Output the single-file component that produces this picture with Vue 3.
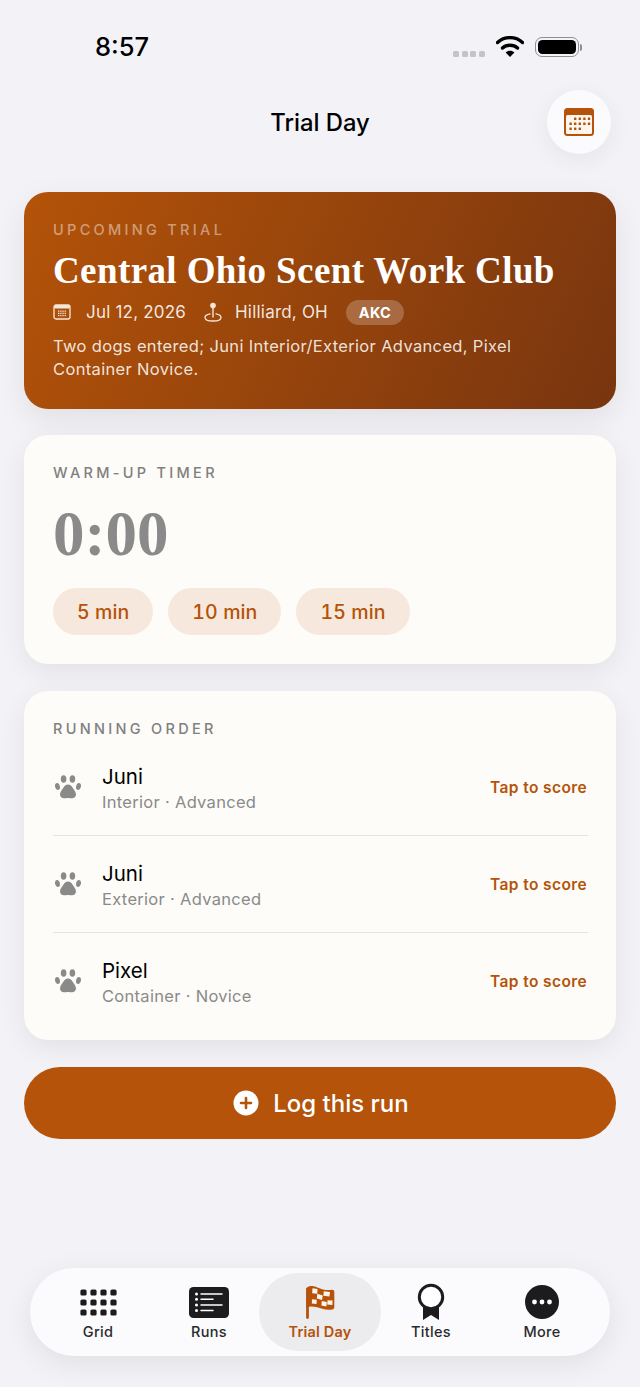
<template>
  <div class="screen">
    <div class="status">
      <span class="time">8:57</span>
      <div class="status-right">
        <div class="signal"><i v-for="n in 4" :key="n"></i></div>
        <svg class="wifi" width="28" height="22" viewBox="0 0 28 22">
          <path d="M1.500 6.500C8.500 0 19.500 0 26.500 6.500" fill="none" stroke="#000" stroke-width="3.400" stroke-linecap="round"/>
          <path d="M6.500 12C10.500 8.300 17.500 8.300 21.500 12" fill="none" stroke="#000" stroke-width="3.400" stroke-linecap="round"/>
          <path d="M9.600 16.400C12 14.200 16 14.200 18.400 16.400L14 21Z" fill="#000"/>
        </svg>
        <div class="battery"><div class="battery-in"></div></div>
        <div class="battery-cap"></div>
      </div>
    </div>

    <header class="top">
      <span></span>
      <h1>Trial Day</h1>
      <button class="cal-btn">
        <svg width="32" height="30" viewBox="0 0 32 30">
          <rect x="1" y="1" width="30" height="28" rx="3.500" fill="#b45309"/>
          <rect x="3" y="8" width="26" height="19" rx="1.500" fill="#fdf6ef"/>
          <g fill="#b45309">
            <rect v-for="d in calDots" :key="d.x + '-' + d.y" :x="d.x" :y="d.y" width="2.400" height="2.400" rx=".5"/>
          </g>
        </svg>
      </button>
    </header>

    <section class="hero">
      <div class="eyebrow">UPCOMING TRIAL</div>
      <h2>Central Ohio Scent Work Club</h2>
      <div class="meta">
        <svg class="meta-ico" width="18" height="16" viewBox="0 0 18 16">
          <rect x="1" y="1" width="16" height="14" rx="2" fill="none" stroke="#f6e6d8" stroke-width="1.300"/>
          <rect x="1" y="1" width="16" height="3.400" rx="1.500" fill="#f6e6d8"/>
          <g fill="#f6e6d8">
            <rect v-for="d in metaDots" :key="d.x + '-' + d.y" :x="d.x" :y="d.y" width="1.300" height="1.300"/>
          </g>
        </svg>
        <span class="date">Jul 12, 2026</span>
        <svg class="meta-ico pin" width="18" height="20" viewBox="0 0 18 20">
          <circle cx="9" cy="3.600" r="2.800" fill="#f6e6d8"/>
          <path d="M9 6v9" stroke="#f6e6d8" stroke-width="1.400" stroke-linecap="round"/>
          <path d="M6 11.800C3 12.400 1 13.600 1 15.400 1 17.600 4.600 19 9 19s8-1.400 8-3.600c0-1.800-2-3-5-3.600" fill="none" stroke="#f6e6d8" stroke-width="1.300" stroke-linecap="round"/>
        </svg>
        <span class="place">Hilliard, OH</span>
        <span class="badge">AKC</span>
      </div>
      <p>Two dogs entered; Juni Interior/Exterior Advanced, Pixel Container Novice.</p>
    </section>

    <section class="card timer">
      <div class="label">WARM-UP TIMER</div>
      <div class="clock">0:00</div>
      <div class="chips">
        <button v-for="c in chips" :key="c" class="chip">{{ c }}</button>
      </div>
    </section>

    <section class="card order">
      <div class="label">RUNNING ORDER</div>
      <div v-for="r in runs" :key="r.sub" class="row">
        <svg class="paw" width="26" height="24" viewBox="0 0 26 24" fill="#8a8a8a">
          <ellipse cx="2.500" cy="11.500" rx="2.400" ry="3.500" transform="rotate(-12 2.500 11.500)"/>
          <ellipse cx="8.600" cy="4" rx="2.800" ry="3.800"/>
          <ellipse cx="17.400" cy="4" rx="2.800" ry="3.800"/>
          <ellipse cx="23.500" cy="11.500" rx="2.400" ry="3.500" transform="rotate(12 23.500 11.500)"/>
          <path d="M13 9.500c2.300 0 3.600 1.500 4.800 3.500 1.300 2.200 3.200 3.900 3.200 6.500 0 2.400-1.800 3.800-4 3.800-1.600 0-2.600-.4-4-.4s-2.400.4-4 .4c-2.200 0-4-1.400-4-3.800 0-2.600 1.900-4.300 3.200-6.500 1.200-2 2.500-3.500 4.800-3.500z"/>
        </svg>
        <div class="row-text">
          <div class="name">{{ r.name }}</div>
          <div class="sub">{{ r.sub }}</div>
        </div>
        <span class="tap">Tap to score</span>
      </div>
    </section>

    <button class="log">
      <svg width="26" height="26" viewBox="0 0 26 26">
        <circle cx="13" cy="13" r="12.500" fill="#fff"/>
        <path d="M13 8v10M8 13h10" stroke="#b45309" stroke-width="2.600" stroke-linecap="round"/>
      </svg>
      <span>Log this run</span>
    </button>

    <nav class="tabs">
      <div class="tab">
        <div class="ico">
          <svg width="37" height="27" viewBox="0 0 37 27" fill="#1c1c1e">
            <rect v-for="d in gridDots" :key="d.x + '-' + d.y" :x="d.x" :y="d.y" width="6.200" height="6.200" rx="1.600"/>
          </svg>
        </div>
        <span>Grid</span>
      </div>
      <div class="tab">
        <div class="ico">
          <svg width="40" height="31" viewBox="0 0 40 31">
            <rect width="40" height="31" rx="4.500" fill="#1c1c1e"/>
            <g fill="#fff">
              <circle cx="7.500" cy="7" r="1.500"/>
              <circle cx="7.500" cy="12.300" r="1.500"/>
              <circle cx="7.500" cy="18" r="1.500"/>
              <circle cx="7.500" cy="23.500" r="1.500"/>
            </g>
            <path d="M12 7h21M12 12.300h12M12 18h21M12 23.500h12" stroke="#fff" stroke-width="1.500" stroke-linecap="round"/>
          </svg>
        </div>
        <span>Runs</span>
      </div>
      <div class="tab active">
        <div class="ico">
          <svg width="30" height="34" viewBox="0 0 30 34">
            <path d="M2.500 4v28.500" stroke="#b45309" stroke-width="2.800" stroke-linecap="round"/>
            <path d="M1.500 5C1.500 2.500 3.500 1 6 1c5 0 8 2.500 12 3.500 3.500.8 6.500.5 9 .3 1.300-.1 2.300.7 2.300 2v15.500c0 1.300-.8 2-2 2.200-3.500.5-6.500.3-10-.7-4.500-1.300-9-3.400-15.800-1.800z" fill="#b45309"/>
            <g fill="#fdf3ea">
              <path d="M7.500 3.300 12.500 4 12.300 8.800 7.200 8.200z"/>
              <path d="M18.800 6.200 25 7 24.500 11.500 18.300 10.800z"/>
              <path d="M12.300 8.800 17.800 10.500 17 15 11.800 13.500z"/>
              <path d="M22.600 15.200 27.600 15.600 27.400 20 22.200 19.600z"/>
              <path d="M7 14.200 11.800 14.800 11.500 19 6.800 18.500z"/>
              <path d="M16.800 16 21.800 17 21.400 21.400 16.400 20.500z"/>
            </g>
          </svg>
        </div>
        <span>Trial Day</span>
      </div>
      <div class="tab">
        <div class="ico">
          <svg width="28" height="38" viewBox="0 0 28 38">
            <path d="M6 22v15l8-5 8 5V22z" fill="#1c1c1e"/>
            <circle cx="14" cy="14" r="11.700" fill="#fff" stroke="#1c1c1e" stroke-width="3"/>
          </svg>
        </div>
        <span>Titles</span>
      </div>
      <div class="tab">
        <div class="ico">
          <svg width="34" height="34" viewBox="0 0 34 34">
            <circle cx="17" cy="17" r="17" fill="#1c1c1e"/>
            <g fill="#fff">
              <circle cx="9.500" cy="17" r="2.400"/>
              <circle cx="17" cy="17" r="2.400"/>
              <circle cx="24.500" cy="17" r="2.400"/>
            </g>
          </svg>
        </div>
        <span>More</span>
      </div>
    </nav>
  </div>
</template>

<script setup>
const chips = ['5 min', '10 min', '15 min']

const runs = [
  { name: 'Juni', sub: 'Interior · Advanced' },
  { name: 'Juni', sub: 'Exterior · Advanced' },
  { name: 'Pixel', sub: 'Container · Novice' },
]

function dots(cols, rows, x0, y0, dx, dy) {
  const out = []
  for (let r = 0; r < rows; r++) {
    for (let c = 0; c < cols; c++) out.push({ x: x0 + c * dx, y: y0 + r * dy })
  }
  return out
}

const calDots = [
  ...dots(4, 1, 11, 10.5, 4.6, 0),
  ...dots(5, 1, 6.4, 15.5, 4.6, 0),
  ...dots(3, 1, 6.4, 20.5, 4.6, 0),
]
const metaDots = dots(4, 3, 5, 6.5, 2.2, 2.2)
const gridDots = dots(4, 3, 0.4, 0.4, 10, 10)
</script>

<style>
html, body {
  margin: 0;
  background: #f2f2f7;
}
</style>

<style scoped>
.screen {
  width: 640px;
  height: 1387px;
  box-sizing: border-box;
  display: flex;
  flex-direction: column;
  padding: 0 24px;
  background: #f2f2f7;
  font-family: Inter, "Noto Sans", sans-serif;
  color: #000;
  overflow: hidden;
}
.status {
  height: 90px;
  flex: none;
  display: flex;
  align-items: flex-start;
  justify-content: space-between;
  margin: 0 -24px;
  padding: 0 58px 0 95px;
  box-sizing: border-box;
}
.time {
  margin-top: 31px;
  font-size: 25.500px;
  line-height: 32px;
  font-weight: 500;
}
.status-right {
  display: flex;
  align-items: center;
  margin-top: 36px;
}
.signal {
  display: flex;
  gap: 2.700px;
  margin-top: 13px;
  margin-right: 11px;
}
.signal i {
  width: 6px;
  height: 6px;
  border-radius: 1.500px;
  background: #c4c4c6;
}
.wifi {
  margin-right: 11px;
}
.battery {
  width: 44px;
  height: 20px;
  box-sizing: border-box;
  border: 1.500px solid #8e8e93;
  border-radius: 7px;
  padding: 2px;
}
.battery-in {
  height: 100%;
  background: #000;
  border-radius: 4.500px;
}
.battery-cap {
  width: 2px;
  height: 7px;
  margin-left: 1px;
  border-radius: 0 2px 2px 0;
  background: #8e8e93;
}
.top {
  flex: none;
  display: grid;
  grid-template-columns: 64px 1fr 64px;
  align-items: center;
  height: 64px;
  margin: 0 5px 38px;
}
.top h1 {
  margin: 0;
  padding-top: 2px;
  text-align: center;
  font-size: 23.800px;
  line-height: 30px;
  font-weight: 500;
}
.cal-btn {
  width: 64px;
  height: 64px;
  padding: 0;
  border: 0;
  border-radius: 50%;
  background: #fbfbfd;
  display: flex;
  align-items: center;
  justify-content: center;
  box-shadow: 0 6px 24px rgba(0, 0, 0, 0.06);
}
.hero {
  flex: none;
  height: 217px;
  box-sizing: border-box;
  padding: 29px 29px 0;
  margin-bottom: 26px;
  border-radius: 24px;
  color: #fff;
  background: linear-gradient(115deg, #b45309 0%, #78350f 100%);
  box-shadow: 0 10px 30px rgba(0, 0, 0, 0.08);
}
.eyebrow {
  font-size: 14.500px;
  line-height: 18px;
  font-weight: 500;
  letter-spacing: 3.300px;
  color: rgba(255, 255, 255, 0.45);
}
.hero h2 {
  margin: 10px 0 0;
  font-family: "Liberation Serif", serif;
  font-size: 37px;
  line-height: 44px;
  font-weight: 700;
  letter-spacing: 0.400px;
  white-space: nowrap;
}
.meta {
  display: flex;
  align-items: center;
  height: 28px;
  margin-top: 5px;
  font-size: 17px;
  color: rgba(255, 255, 255, 0.88);
}
.meta-ico {
  flex: none;
}
.date {
  margin-left: 15px;
  letter-spacing: 0.200px;
}
.pin {
  margin-left: 18px;
}
.place {
  margin-left: 13px;
  letter-spacing: 0.200px;
}
.badge {
  margin-left: 18px;
  height: 25px;
  width: 58px;
  border-radius: 13px;
  display: flex;
  align-items: center;
  justify-content: center;
  font-size: 14.500px;
  font-weight: 700;
  letter-spacing: 0.300px;
  color: #fff;
  background: rgba(255, 255, 255, 0.22);
}
.hero p {
  margin: 9px 0 0;
  font-size: 16.500px;
  line-height: 23px;
  letter-spacing: 0.340px;
  color: rgba(255, 255, 255, 0.86);
}
.card {
  flex: none;
  box-sizing: border-box;
  border-radius: 24px;
  background: #fdfcf8;
  box-shadow: 0 8px 28px rgba(0, 0, 0, 0.07);
  padding: 29px 28px 0 29px;
  margin-bottom: 27px;
}
.label {
  font-size: 14.500px;
  line-height: 18px;
  font-weight: 500;
  letter-spacing: 3.300px;
  color: #808080;
}
.timer {
  height: 229px;
}
.clock {
  margin-top: 17px;
  font-family: "Liberation Serif", serif;
  font-size: 63px;
  line-height: 70px;
  font-weight: 700;
  color: #8a8a8a;
}
.chips {
  display: flex;
  gap: 15px;
  margin-top: 19px;
}
.chip {
  height: 47px;
  padding: 0 24px;
  border: 0;
  border-radius: 24px;
  background: #f6e8dc;
  color: #b45309;
  font-family: inherit;
  font-size: 19.500px;
  font-weight: 500;
  font-variant-numeric: tabular-nums;
  letter-spacing: 0.100px;
}
.order {
  height: 349px;
}
.order .label {
  margin-bottom: 1px;
}
.row {
  display: flex;
  align-items: center;
  height: 97px;
  border-bottom: 1px solid #e4e3df;
  box-sizing: border-box;
}
.row:last-child {
  border-bottom-color: transparent;
}
.paw {
  flex: none;
  margin-left: 2px;
}
.row-text {
  flex: 1;
  margin: 3px 0 0 21px;
}
.name {
  font-size: 20.500px;
  line-height: 25px;
}
.sub {
  margin-top: 2px;
  font-size: 16.500px;
  line-height: 22px;
  letter-spacing: 0.300px;
  color: #8a8a8a;
}
.tap {
  margin-right: 1px;
  font-size: 15.500px;
  font-weight: 600;
  letter-spacing: 0.400px;
  color: #b45309;
}
.log {
  flex: none;
  height: 72px;
  padding: 0 0 0 2px;
  border: 0;
  border-radius: 36px;
  background: #b45309;
  color: #fff;
  display: flex;
  align-items: center;
  justify-content: center;
  gap: 14px;
  font-family: inherit;
  font-size: 24px;
  font-weight: 500;
}
.tabs {
  flex: none;
  margin: auto 6px 31px;
  height: 88px;
  display: grid;
  grid-template-columns: repeat(5, 1fr);
  padding: 5px 12.500px;
  box-sizing: border-box;
  border-radius: 44px;
  background: #fbfbfd;
  box-shadow: 0 8px 30px rgba(0, 0, 0, 0.08);
}
.tab {
  display: flex;
  flex-direction: column;
  align-items: center;
  gap: 2px;
  padding-top: 10px;
  border-radius: 40px;
  font-size: 14.500px;
  line-height: 18px;
  font-weight: 500;
  letter-spacing: 0.300px;
  color: #2a2a2c;
}
.ico {
  height: 38px;
  display: flex;
  align-items: center;
}
.tab.active {
  margin: 0 -5.500px;
  background: #ececee;
  color: #b45309;
  font-weight: 600;
  letter-spacing: 0.200px;
}
</style>
